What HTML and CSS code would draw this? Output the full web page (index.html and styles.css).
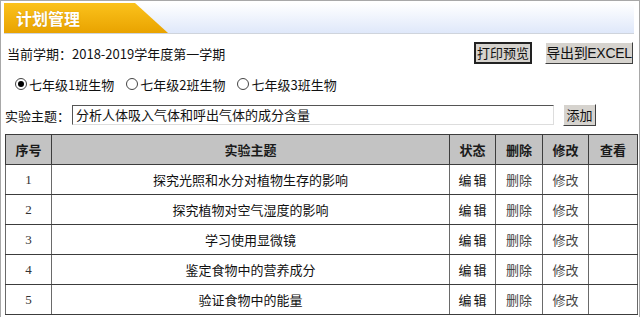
FILE: index.html
```html
<!DOCTYPE html>
<html lang="zh-CN">
<head>
<meta charset="utf-8">
<title>计划管理</title>
<link rel="stylesheet" href="styles.css">
</head>
<body>
<div class="frame">
  <div class="header">
    <div class="tab">计划管理</div>
  </div>
  <div class="info">
    <span class="term">当前学期：2018-2019学年度第一学期</span>
    <div class="btns">
      <button class="btn btn-default">打印预览</button>
      <button class="btn btn-excel">导出到EXCEL</button>
    </div>
  </div>
  <div class="radios">
    <label class="radio"><span class="dot checked"></span>七年级1班生物</label>
    <label class="radio"><span class="dot"></span>七年级2班生物</label>
    <label class="radio"><span class="dot"></span>七年级3班生物</label>
  </div>
  <div class="topic">
    <span class="lbl">实验主题：</span>
    <div class="input">分析人体吸入气体和呼出气体的成分含量</div>
    <button class="btn btn-add">添加</button>
  </div>
  <table class="grid">
    <colgroup>
      <col class="c1"><col class="c2"><col class="c3"><col class="c4"><col class="c5"><col class="c6">
    </colgroup>
    <thead>
      <tr><th>序号</th><th>实验主题</th><th>状态</th><th>删除</th><th>修改</th><th>查看</th></tr>
    </thead>
    <tbody>
      <tr><td class="num">1</td><td>探究光照和水分对植物生存的影响</td><td class="edit">编辑</td><td class="act">删除</td><td class="act">修改</td><td></td></tr>
      <tr><td class="num">2</td><td>探究植物对空气湿度的影响</td><td class="edit">编辑</td><td class="act">删除</td><td class="act">修改</td><td></td></tr>
      <tr><td class="num">3</td><td>学习使用显微镜</td><td class="edit">编辑</td><td class="act">删除</td><td class="act">修改</td><td></td></tr>
      <tr><td class="num">4</td><td>鉴定食物中的营养成分</td><td class="edit">编辑</td><td class="act">删除</td><td class="act">修改</td><td></td></tr>
      <tr><td class="num">5</td><td>验证食物中的能量</td><td class="edit">编辑</td><td class="act">删除</td><td class="act">修改</td><td></td></tr>
    </tbody>
  </table>
</div>
</body>
</html>
```

FILE: styles.css
```css
html, body {
  margin: 0;
  padding: 0;
  background: #fff;
}
body {
  font-family: "Noto Sans CJK SC", "Liberation Sans", sans-serif;
  font-size: 13px;
  color: #111;
}
.frame {
  box-sizing: border-box;
  width: 640px;
  height: 317px;
  border: 1px solid #a8a8a8;
  border-bottom: none;
  overflow: hidden;
}
.header {
  margin: 2px 5px 0 3px;
  height: 30px;
  background: linear-gradient(#ffffff, #dfe8fa);
  border-bottom: 1px solid #cfd4dc;
  position: relative;
}
.tab {
  width: 164px;
  height: 30px;
  box-sizing: border-box;
  padding-left: 12px;
  background: linear-gradient(#fbc21c, #e9a300);
  clip-path: polygon(0 0, 131px 0, 164px 100%, 0 100%);
  color: #fff;
  font-weight: bold;
  font-size: 16px;
  line-height: 30px;
  text-shadow: 0 0 1px rgba(150, 90, 0, 0.5);
}
.info {
  margin: 8px 6px 0 6px;
  height: 22px;
  display: flex;
  align-items: center;
  justify-content: space-between;
}
.btns {
  display: flex;
  gap: 13px;
}
.btn {
  font-family: "Noto Sans CJK SC", "Liberation Sans", sans-serif;
  font-size: 13px;
  height: 22px;
  padding: 0;
  margin: 0;
  white-space: nowrap;
  background: #d6d3ce;
  color: #111;
  border: 1px solid;
  border-color: #fff #404040 #404040 #fff;
  line-height: 18px;
}
.btn-default {
  width: 58px;
  border-width: 2px;
  border-color: #222;
}
.btn-excel {
  width: 88px;
  font-family: "Liberation Sans", "Noto Sans CJK SC", sans-serif;
  font-size: 14px;
  letter-spacing: -0.3px;
}
.radios {
  margin: 9px 0 0 14px;
  height: 22px;
  display: flex;
  align-items: center;
  gap: 12px;
}
.radio {
  display: flex;
  align-items: center;
}
.dot {
  width: 10px;
  height: 10px;
  border: 1px solid #444;
  border-radius: 50%;
  background: #fff;
  margin-right: 2px;
  position: relative;
}
.dot.checked::after {
  content: "";
  position: absolute;
  left: 2px;
  top: 2px;
  width: 6px;
  height: 6px;
  border-radius: 50%;
  background: #000;
}
.topic {
  margin: 9px 0 0 4px;
  height: 22px;
  display: flex;
  align-items: center;
}
.lbl {
  width: 67px;
}
.input {
  box-sizing: border-box;
  width: 482px;
  height: 20px;
  border: 1px solid;
  border-color: #555 #ddd #ddd #555;
  padding-left: 3px;
  line-height: 18px;
  white-space: nowrap;
}
.btn-add {
  margin-left: 9px;
  width: 33px;
}
.grid {
  margin: 8px 0 0 4px;
  width: 632px;
  border-collapse: collapse;
  table-layout: fixed;
}
.c1 { width: 46px; }
.c2 { width: 398px; }
.c3 { width: 46px; }
.c4 { width: 47px; }
.c5 { width: 46px; }
.c6 { width: 49px; }
.grid th, .grid td {
  border: 1px solid #3c3c3c;
  height: 29px;
  padding: 0;
  text-align: center;
  vertical-align: middle;
}
.grid th {
  background: #c3c3c3;
  font-weight: bold;
  color: #1a1a1a;
  font-size: 13px;
}
.grid td {
  border-left-color: #6a6a6a;
  border-right-color: #6a6a6a;
}
.num {
  font-family: "Liberation Serif", serif;
  color: #333;
}
.edit {
  letter-spacing: 2px;
  padding-left: 2px !important;
}
.act {
  color: #444;
}
```
